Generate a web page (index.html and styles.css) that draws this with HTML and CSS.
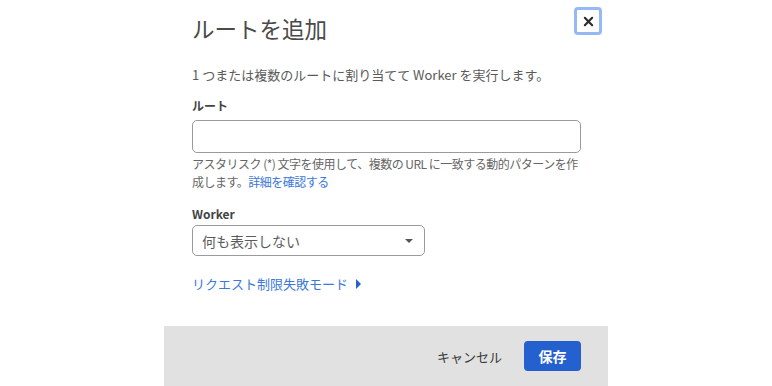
FILE: index.html
```html
<!DOCTYPE html>
<html lang="ja">

<head>
    <meta charset="UTF-8">
    <meta name="viewport" content="width=device-width, initial-scale=1.0">
    <title>ルートを追加</title>
    <link rel="stylesheet" href="styles.css">
</head>

<body>
    <div class="dialog">
        <div class="dialog-body">
            <header class="dialog-header">
                <h1>ルートを追加</h1>
                <button class="close-btn" aria-label="閉じる">
                    <svg width="11" height="11" viewBox="0 0 12 12">
                        <path d="M2 2 L10 10 M10 2 L2 10" stroke="#2b2b2b" stroke-width="2.3" stroke-linecap="round" />
                    </svg>
                </button>
            </header>

            <p class="intro">1 つまたは複数のルートに割り当てて Worker を実行します。</p>

            <div class="field">
                <label for="route-input">ルート</label>
                <input type="text" id="route-input" class="text-input">
                <p class="help">アスタリスク (*) 文字を使用して、複数の URL に一致する動的パターンを作成します。<a href="#">詳細を確認する</a></p>
            </div>

            <div class="field field-select">
                <label for="worker-select">Worker</label>
                <div class="select" id="worker-select">
                    <span>何も表示しない</span>
                    <span class="caret"></span>
                </div>
            </div>

            <a href="#" class="toggle-link">リクエスト制限失敗モード <span class="arrow"></span></a>
        </div>

        <footer class="dialog-footer">
            <button class="btn-cancel">キャンセル</button>
            <button class="btn-save">保存</button>
        </footer>
    </div>
</body>

</html>
```

FILE: styles.css
```css
:root {
    --text-color: #333333;
    --muted-color: #5a5a5a;
    --border-color: #9a9a9a;
    --link-color: #3a78d9;
    --primary-color: #2461cf;
    --footer-bg: #e1e1e1;
    --font-family: 'Noto Sans CJK JP', 'Noto Sans', sans-serif;
}

* {
    box-sizing: border-box;
    margin: 0;
    padding: 0;
}

body {
    font-family: var(--font-family);
    background-color: #ffffff;
    color: var(--text-color);
}

.dialog {
    width: 444px;
    height: 386px;
    margin: 0 auto;
    display: flex;
    flex-direction: column;
    background-color: #ffffff;
}

.dialog-body {
    flex: 1;
    padding: 7px 27px 0 28px;
}

.dialog-header {
    display: flex;
    justify-content: space-between;
    align-items: flex-start;
    margin-right: -21px;
}

.dialog-header h1 {
    font-size: 22.5px;
    font-weight: 400;
    line-height: 32px;
    color: #4a4a4a;
    margin-top: 5px;
}

.close-btn {
    width: 28px;
    height: 28px;
    display: flex;
    align-items: center;
    justify-content: center;
    background-color: #ffffff;
    border: 3px solid #94b9f5;
    border-radius: 4px;
    cursor: pointer;
}

.intro {
    font-size: 13px;
    line-height: 20px;
    color: var(--muted-color);
    margin-top: 21px;
}

.field {
    margin-top: 12px;
}

.field label {
    display: block;
    font-size: 12px;
    font-weight: 700;
    line-height: 18px;
    color: #444444;
    margin-bottom: 5px;
}

.text-input {
    display: block;
    width: 100%;
    height: 33px;
    border: 1px solid var(--border-color);
    border-radius: 5px;
    outline: none;
}

.help {
    font-size: 12px;
    line-height: 18px;
    letter-spacing: -0.5px;
    color: #666666;
    margin: 2px -4px 0 0;
}

.help a {
    color: var(--link-color);
    text-decoration: none;
}

.field + .field {
    margin-top: 14px;
}

.field-select label {
    margin-bottom: 2px;
}

.select {
    width: 233px;
    height: 31px;
    display: flex;
    align-items: center;
    justify-content: space-between;
    padding: 0 11px 0 9px;
    border: 1px solid var(--border-color);
    border-radius: 5px;
    font-size: 14px;
    color: #5c5c5c;
}

.caret {
    width: 0;
    height: 0;
    border-left: 4.5px solid transparent;
    border-right: 4.5px solid transparent;
    border-top: 4.5px solid #555555;
}

.toggle-link {
    display: inline-flex;
    align-items: center;
    gap: 8px;
    margin-top: 18px;
    font-size: 13px;
    line-height: 20px;
    color: var(--link-color);
    text-decoration: none;
}

.arrow {
    width: 0;
    height: 0;
    border-top: 5px solid transparent;
    border-bottom: 5px solid transparent;
    border-left: 5px solid var(--primary-color);
}

.dialog-footer {
    height: 60px;
    display: flex;
    align-items: center;
    justify-content: flex-end;
    gap: 22px;
    padding: 0 27px;
    background-color: var(--footer-bg);
}

.btn-cancel {
    font-family: var(--font-family);
    font-size: 13px;
    color: #3a3a3a;
    background: none;
    border: none;
    cursor: pointer;
}

.btn-save {
    width: 57px;
    height: 30px;
    font-family: var(--font-family);
    font-size: 14px;
    font-weight: 700;
    color: #ffffff;
    background-color: var(--primary-color);
    border: none;
    border-radius: 4px;
    cursor: pointer;
}
```
